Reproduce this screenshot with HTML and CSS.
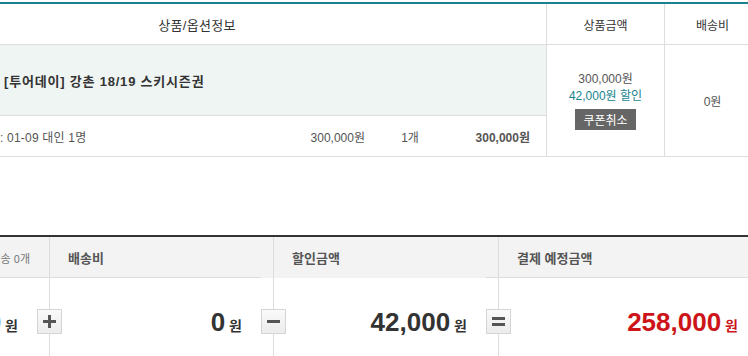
FILE: index.html
```html
<!DOCTYPE html>
<html lang="ko">
<head>
    <meta charset="UTF-8">
    <meta name="viewport" content="width=device-width, initial-scale=1.0">
    <title>장바구니</title>
    <link rel="stylesheet" href="styles.css">
</head>
<body>
    <div class="page">
        <div class="cart">
            <div class="cart-row cart-head">
                <div class="cell wide">상품/옵션정보</div>
                <div class="cell line">상품금액</div>
                <div class="cell line">배송비</div>
            </div>
            <div class="cart-row cart-body">
                <div class="cell item">
                    <div class="item-name">[투어데이] 강촌 18/19 스키시즌권</div>
                    <div class="item-option">
                        <span class="opt-text">: 01-09 대인 1명</span>
                        <span class="opt-price">300,000원</span>
                        <span class="opt-qty">1개</span>
                        <span class="opt-total">300,000원</span>
                    </div>
                </div>
                <div class="cell line price-cell">
                    <p>300,000원</p>
                    <p class="discount">42,000원 할인</p>
                    <button class="btn-coupon">쿠폰취소</button>
                </div>
                <div class="cell line ship-cell">0원</div>
            </div>
        </div>

        <div class="summary">
            <div class="sum-head first"><span class="ship-count">배송 0개</span></div>
            <div class="sum-head line cut-right">배송비</div>
            <div class="sum-head line cut-left">할인금액</div>
            <div class="sum-head line">결제 예정금액</div>

            <div class="sum-value">
                <strong>0</strong><span class="won">원</span>
            </div>
            <div class="sum-value line">
                <span class="op">
                    <svg width="13" height="13" viewBox="0 0 13 13"><path d="M5 0h3v5h5v3H8v5H5V8H0V5h5z" fill="#555"/></svg>
                </span>
                <strong>0</strong><span class="won">원</span>
            </div>
            <div class="sum-value line">
                <span class="op">
                    <svg width="13" height="13" viewBox="0 0 13 13"><rect x="0" y="5" width="13" height="3" fill="#555"/></svg>
                </span>
                <strong>42,000</strong><span class="won">원</span>
            </div>
            <div class="sum-value line total">
                <span class="op">
                    <svg width="13" height="13" viewBox="0 0 13 13"><rect x="0" y="2" width="13" height="3" fill="#555"/><rect x="0" y="8" width="13" height="3" fill="#555"/></svg>
                </span>
                <strong>258,000</strong><span class="won">원</span>
            </div>
        </div>
    </div>
</body>
</html>
```

FILE: styles.css
```css
html, body {
    margin: 0;
    padding: 0;
    background: #fff;
    overflow: hidden;
}
body {
    font-family: "Liberation Sans", "Noto Sans CJK KR", sans-serif;
    font-size: 12px;
    color: #555;
}
/* page is wider than the window, left part scrolled out */
.page {
    width: 912px;
    margin-left: -152px;
}
.cart {
    margin-top: 2px;
    border-top: 2px solid #1e808c;
}
.cart-row {
    display: grid;
    grid-template-columns: 698px 118px 96px;
}
.line {
    border-left: 1px solid #ddd;
}
.cart-head {
    height: 40px;
    border-bottom: 1px solid #ddd;
}
.cart-head .cell {
    display: flex;
    align-items: center;
    justify-content: center;
    color: #333;
}
.cart-head .wide {
    font-size: 13px;
    letter-spacing: 0.3px;
}
.cart-body {
    border-bottom: 1px solid #ddd;
}
.item-name {
    height: 70px;
    display: flex;
    align-items: center;
    padding-left: 156px;
    background: #eff5f2;
    border-bottom: 1px solid #ddd;
    font-size: 13px;
    letter-spacing: 0.8px;
    font-weight: bold;
    color: #333;
}
.item-option {
    height: 40px;
    display: flex;
    align-items: center;
    padding-left: 152px;
    padding-right: 16px;
}
.opt-text {
    flex: 1;
    letter-spacing: 0.2px;
}
.opt-price {
    width: 80px;
    text-align: right;
}
.opt-qty {
    width: 90px;
    text-align: center;
}
.opt-total {
    width: 75px;
    text-align: right;
    font-weight: bold;
}
.price-cell {
    display: flex;
    flex-direction: column;
    align-items: center;
    justify-content: center;
}
.price-cell p {
    margin: 0;
    line-height: 17px;
}
.price-cell .discount {
    color: #17848f;
}
.btn-coupon {
    margin-top: 4px;
    width: 61px;
    height: 21px;
    padding: 0;
    border: none;
    background: #666;
    color: #fff;
    font-family: "Noto Sans CJK KR", sans-serif;
    font-size: 12px;
}
.ship-cell {
    display: flex;
    align-items: center;
    justify-content: center;
}

.summary {
    margin-top: 78px;
    border-top: 2px solid #333;
    display: grid;
    grid-template-columns: 201px 224px 225px 262px;
}
.sum-head {
    height: 41px;
    box-sizing: border-box;
    padding-left: 18px;
    display: flex;
    align-items: center;
    font-family: "Noto Sans CJK KR", sans-serif;
    font-size: 13px;
    font-weight: bold;
    color: #555;
    background: linear-gradient(#ddd, #ddd) left bottom / 100% 1px no-repeat, #f3f3f3;
}
.sum-head.first {
    justify-content: flex-end;
    padding-right: 19px;
}
.sum-head.cut-right {
    background: linear-gradient(#ddd, #ddd) left bottom / calc(100% - 12px) 1px no-repeat, #f3f3f3;
}
.sum-head.cut-left {
    background: linear-gradient(#ddd, #ddd) right bottom / 12px 1px no-repeat, #f3f3f3;
}
.ship-count {
    font-size: 11px;
    font-weight: normal;
    color: #777;
}
.sum-value {
    position: relative;
    height: 86px;
    display: flex;
    align-items: center;
    justify-content: flex-end;
    padding-right: 31px;
    color: #333;
}
.sum-value strong {
    font-family: "Liberation Sans", sans-serif;
    font-size: 26px;
    line-height: 26px;
    padding-top: 2px;
}
.sum-value .won {
    margin-left: 4px;
    margin-top: 8px;
    font-family: "Noto Sans CJK KR", sans-serif;
    font-size: 14px;
    font-weight: bold;
}
.sum-value.total {
    padding-right: 22px;
    color: #cc1419;
}
.op {
    position: absolute;
    left: -13px;
    top: 31px;
    width: 23px;
    height: 23px;
    border: 1px solid #d5d5d5;
    background: linear-gradient(#fafafa, #ececec);
    display: flex;
    align-items: center;
    justify-content: center;
}
.op svg {
    display: block;
}
```
